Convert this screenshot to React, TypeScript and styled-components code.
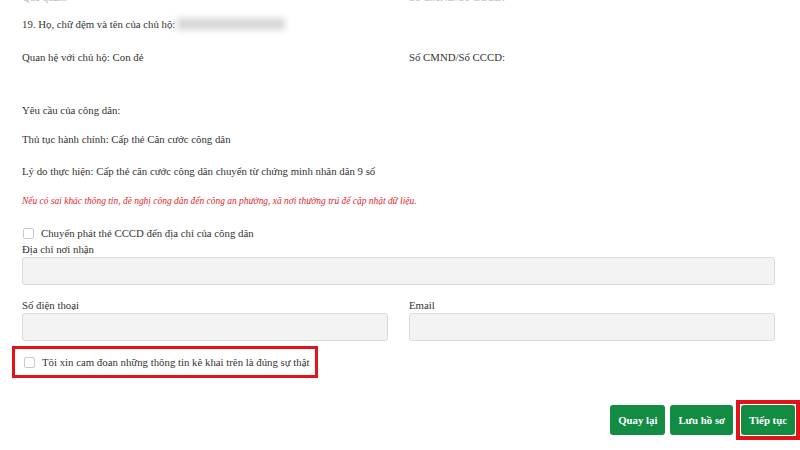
import React from 'react';
import styled, { createGlobalStyle } from 'styled-components';

const GlobalStyle = createGlobalStyle`
  html, body {
    margin: 0;
    padding: 0;
    background: #ffffff;
    overflow: hidden;
  }
`;

const Page = styled.div`
  width: 800px;
  height: 450px;
  overflow: hidden;
  padding: 0 25px 0 22px;
  box-sizing: border-box;
  font-family: "Liberation Serif", "Times New Roman", serif;
  color: #333333;
`;

const TwoCols = styled.div<{ top?: number }>`
  display: grid;
  grid-template-columns: 366px 366px;
  column-gap: 21px;
  margin-top: ${p => p.top ?? 0}px;
`;

const Line = styled.div<{ top?: number; faded?: boolean }>`
  font-size: 10.8px;
  line-height: 14px;
  margin-top: ${p => p.top ?? 0}px;
  color: ${p => (p.faded ? '#b5b5b5' : '#333333')};
  white-space: nowrap;
`;

const Blurred = styled.span`
  display: inline-block;
  width: 108px;
  height: 12px;
  margin-left: 2px;
  vertical-align: -2px;
  background: #d8d8d8;
  filter: blur(3px);
`;

const Warning = styled.div`
  margin-top: 17px;
  font-size: 9.45px;
  line-height: 12px;
  font-style: italic;
  color: #e0252b;
  white-space: nowrap;
`;

const CheckRow = styled.label<{ top?: number }>`
  display: flex;
  align-items: center;
  gap: 7px;
  margin-top: ${p => p.top ?? 0}px;
  padding-left: 1px;
  font-size: 10.8px;
  line-height: 14px;
  color: #333333;
  white-space: nowrap;
`;

const Box = styled.span`
  width: 9px;
  height: 9px;
  border: 1px solid #c9c9c9;
  border-radius: 2px;
  background: #ffffff;
  flex: none;
`;

const Field = styled.div<{ top?: number }>`
  display: flex;
  flex-direction: column;
  margin-top: ${p => p.top ?? 0}px;
`;

const Label = styled.div`
  font-size: 10.8px;
  line-height: 14px;
  color: #333333;
  margin-bottom: 1px;
`;

const Input = styled.div`
  height: 26px;
  border: 1px solid #dadada;
  border-radius: 3px;
  background: #f3f3f3;
`;

const Highlight = styled.div`
  margin: 5px 0 0 -10px;
  width: 306px;
  height: 32px;
  border: 3px solid #e3131b;
  box-sizing: border-box;
  display: flex;
  align-items: center;
  padding-left: 8px;
`;

const Actions = styled.div`
  display: flex;
  justify-content: flex-end;
  align-items: center;
  gap: 5px;
  margin-top: 22px;
  margin-right: -25px;
`;

const Button = styled.button`
  font-family: "Liberation Serif", "Times New Roman", serif;
  font-weight: bold;
  font-size: 10.8px;
  color: #ffffff;
  background: #138c43;
  border: none;
  border-radius: 3px;
  height: 30px;
  padding: 0 8px;
  cursor: pointer;
`;

const Marked = styled.span`
  display: inline-flex;
  margin-left: -2px;
  padding: 1px;
  border: 4px solid #e3131b;
  background: #ffffff;
`;

export default function App() {
  return (
    <Page>
      <GlobalStyle />
      <TwoCols top={-10}>
        <Line faded>Quê quán:</Line>
        <Line faded>Số CMND/Số CCCD:</Line>
      </TwoCols>
      <Line top={13}>
        19. Họ, chữ đệm và tên của chủ hộ:<Blurred />
      </Line>
      <TwoCols top={19}>
        <Line>Quan hệ với chủ hộ: Con đẻ</Line>
        <Line>Số CMND/Số CCCD:</Line>
      </TwoCols>
      <Line top={39}>Yêu cầu của công dân:</Line>
      <Line top={15}>Thủ tục hành chính: Cấp thẻ Căn cước công dân</Line>
      <Line top={18}>Lý do thực hiện: Cấp thẻ căn cước công dân chuyển từ chứng minh nhân dân 9 số</Line>
      <Warning>Nếu có sai khác thông tin, đề nghị công dân đến công an phường, xã nơi thường trú để cập nhật dữ liệu.</Warning>
      <CheckRow top={19}>
        <Box />
        Chuyển phát thẻ CCCD đến địa chỉ của công dân
      </CheckRow>
      <Field top={2}>
        <Label>Địa chỉ nơi nhận</Label>
        <Input />
      </Field>
      <TwoCols top={13}>
        <Field>
          <Label>Số điện thoại</Label>
          <Input />
        </Field>
        <Field>
          <Label>Email</Label>
          <Input />
        </Field>
      </TwoCols>
      <Highlight>
        <CheckRow>
          <Box />
          Tôi xin cam đoan những thông tin kê khai trên là đúng sự thật
        </CheckRow>
      </Highlight>
      <Actions>
        <Button>Quay lại</Button>
        <Button>Lưu hồ sơ</Button>
        <Marked>
          <Button>Tiếp tục</Button>
        </Marked>
      </Actions>
    </Page>
  );
}
